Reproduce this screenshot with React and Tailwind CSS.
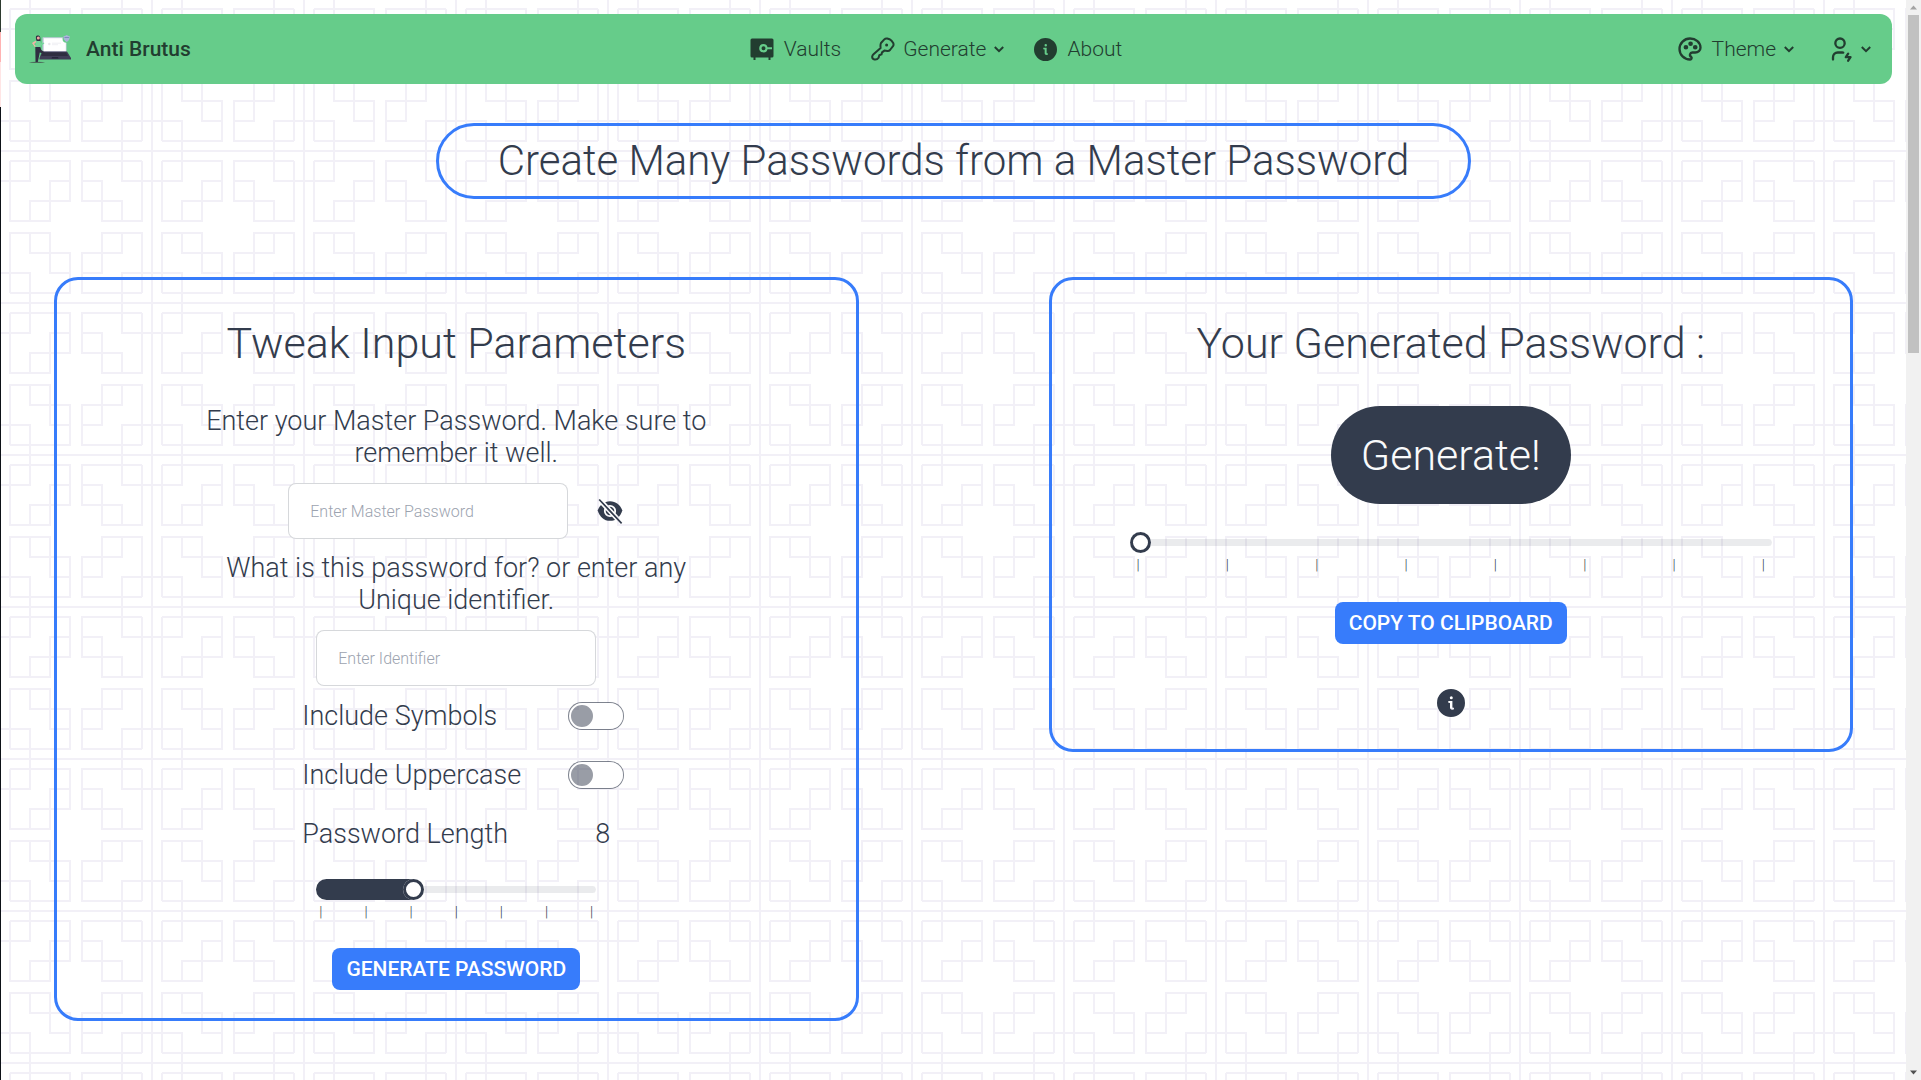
import { useState } from "react";
import { TbPalette, TbUserBolt } from "react-icons/tb";

const QUADRANT =
  "M10 10H70V50H30V70M10 10V70H50V30H70M0 30H30V0";

function PatternBackdrop() {
  return (
    <svg className="absolute inset-0 h-full w-full" aria-hidden="true">
      <defs>
        <g id="fret" fill="none" stroke="#f2f0f7" strokeWidth="2">
          <path d={QUADRANT} />
        </g>
        <pattern id="lattice" x="-1" y="-1" width="152" height="152" patternUnits="userSpaceOnUse">
          <use href="#fret" />
          <use href="#fret" transform="translate(152 0) scale(-1 1)" />
          <use href="#fret" transform="translate(0 152) scale(1 -1)" />
          <use href="#fret" transform="translate(152 152) scale(-1 -1)" />
          <path d="M0 0H152V152H0Z" fill="none" stroke="#f2f0f7" strokeWidth="2" />
        </pattern>
      </defs>
      <rect width="100%" height="100%" fill="url(#lattice)" />
    </svg>
  );
}

function Logo() {
  return (
    <svg className="h-7 w-[42px]" viewBox="0 0 42 28" aria-hidden="true">
      <ellipse cx="8" cy="27.3" rx="8" ry="0.6" fill="#4b6b5a" />
      <path d="M14 2.2h22.5a1 1 0 0 1 1 1V17H13.5V3a.8.8 0 0 1 .5-.8Z" fill="#c9cbe0" />
      <path d="M14.8 3.2h22v13h-22z" fill="#fff" />
      <circle cx="20.300" cy="9" r="1.2" fill="#e6e6ea" />
      <path d="M23 8.200h9M23 9.700h6" stroke="#ececf0" strokeWidth="0.8" />
      <path d="M13 16.500h25l4 6.500v1.500H10.500V23Z" fill="#3f3d56" />
      <path d="M14 17.500h23l2 3.500H12Z" fill="#2f2e41" />
      <path d="M23 22h6l.6 1.500h-7z" fill="#26263a" />
      <circle cx="37.500" cy="3.800" r="4" fill="#66cc8a" />
      <path d="M34.500 1c1.500 0 2.500-.5 3.200-1 .7.500 1.700 1 3 1 .2 2.800-.8 5-3 6-2.200-1-3.400-3.200-3.200-6Z" fill="#a9b4d8" />
      <path d="M35.500 2.500h4.500" stroke="#7d8bbd" strokeWidth="1" />
      <path d="M7 1.500C7.500 0 11 .2 11.200 2.200c.2 1.500.6 3 .2 4H8C7 5 6.700 3 7 1.500Z" fill="#2f2e41" />
      <circle cx="9.300" cy="3" r="1.500" fill="#f0a7a0" />
      <path d="M3 8 6.500 5.800 7.500 7 5 9l2 2-1 1.200Z" fill="#f3b3a6" />
      <path d="M7 6h4l1 2.500 3-1 .3 1L11.500 11l-.3 1.500H6.500Z" fill="#74d69a" />
      <path d="M6.300 12h5l1 3 3.500 2.500-1 1.300-4-1.300L8.800 27H6.500Z" fill="#2f2e41" />
    </svg>
  );
}

function SafeIcon() {
  return (
    <svg className="h-6 w-6" viewBox="0 0 24 24" fill="currentColor" aria-hidden="true">
      <path
        fillRule="evenodd"
        d="M2 1.500h20A1.500 1.500 0 0 1 23.500 3v16A1.500 1.500 0 0 1 22 20.500h-1.500V23h-2v-2.500h-13V23h-2v-2.500H2A1.500 1.500 0 0 1 .5 19V3A1.500 1.500 0 0 1 2 1.500ZM13.500 7a4.200 4.200 0 1 0 4 5.200H22v-2h-4.500A4.200 4.200 0 0 0 13.500 7Zm0 2.200a2 2 0 1 1 0 4 2 2 0 0 1 0-4Z"
      />
    </svg>
  );
}

function KeyIcon() {
  return (
    <svg className="h-6 w-6" viewBox="0 0 24 24" fill="none" stroke="currentColor" strokeWidth="2" strokeLinejoin="round" aria-hidden="true">
      <path d="M10 6 13.300 2.400Q14.500 1.200 16.200 1.500L18.500 2.200Q20.800 3.500 22.200 6 23 7.800 22 9.200L19 13Q18 14.200 16.300 14L13.400 13.600 11 15.400 10.500 17.400 8.300 18.300 7.600 20.700Q6 23 3.500 22.500 1 22 1.200 19.500 1.500 18.200 2.500 17.300L9.600 11Q9.200 7.300 10 6Z" />
      <circle cx="15.600" cy="8" r="1.500" fill="currentColor" stroke="none" />
    </svg>
  );
}

function InfoIcon({ className }) {
  return (
    <svg className={className} viewBox="0 0 28 28" fill="currentColor" aria-hidden="true">
      <path
        fillRule="evenodd"
        d="M14 0a14 14 0 1 1 0 28 14 14 0 0 1 0-28ZM14.300 7.200a1.500 1.500 0 1 0 0 3 1.500 1.500 0 0 0 0-3ZM11.300 12v1.700l1.700.3v4.600c0 1.400.8 2.100 2.200 2.100.8 0 1.400-.2 1.900-.5l-.2-1.500c-.9.300-1.500.1-1.500-.7V12Z"
      />
    </svg>
  );
}

function EyeOffIcon() {
  return (
    <svg className="h-7 w-7" viewBox="0 0 28 28" aria-hidden="true">
      <defs>
        <mask id="eye-cut">
          <rect width="28" height="28" fill="#fff" />
          <circle cx="14" cy="14" r="5.200" fill="none" stroke="#000" strokeWidth="1.800" />
          <path d="M1.800 3.200 24.300 27" stroke="#000" strokeWidth="2" />
          <path d="M4.600 1.800 27 25.600" stroke="#000" strokeWidth="2" />
        </mask>
      </defs>
      <path
        d="M14 4.200c6 0 10.400 3.800 12.300 9.200C24.400 19.700 20 23.800 14 23.800S3.600 19.700 1.700 13.400C3.600 8 8 4.200 14 4.200Z"
        fill="currentColor"
        mask="url(#eye-cut)"
      />
      <path d="M3.200 2.500 25.600 26.300" stroke="currentColor" strokeWidth="1.700" />
    </svg>
  );
}

function Chevron() {
  return (
    <svg className="h-[7px] w-[10px]" viewBox="0 0 10 7" fill="none" stroke="currentColor" strokeWidth="2" aria-hidden="true">
      <path d="M.8 1 5 5.200 9.200 1" />
    </svg>
  );
}

function Header() {
  return (
    <header className="mx-[14px] mt-[14px] flex h-[70px] items-center rounded-xl bg-[#66cc8a] px-[14px] text-[21px] font-light text-[#223d30]">
      <a href="#home" className="flex flex-1 items-center gap-[15px] font-medium">
        <Logo />
        Anti Brutus
      </a>
      <nav className="mr-7 flex items-center gap-[30px]">
        <a href="#vaults" className="flex items-center gap-[10px]">
          <SafeIcon />
          Vaults
        </a>
        <button type="button" className="flex items-center gap-2">
          <KeyIcon />
          Generate
          <Chevron />
        </button>
        <a href="#about" className="flex items-center gap-[10px]">
          <InfoIcon className="h-[23px] w-[23px]" />
          About
        </a>
      </nav>
      <div className="flex flex-1 items-center justify-end gap-8 pr-[7px]">
        <button type="button" className="flex items-center gap-2">
          <TbPalette className="h-7 w-7" />
          Theme
          <Chevron />
        </button>
        <button type="button" aria-label="Account" className="flex items-center gap-[7px]">
          <TbUserBolt className="h-7 w-7" />
          <Chevron />
        </button>
      </div>
    </header>
  );
}

function Card({ title, children }) {
  return (
    <section className="flex flex-col items-center rounded-3xl border-3 border-[#377cfb] pt-[39px]">
      <h2 className="text-[43px] leading-[48px] font-light">{title}</h2>
      {children}
    </section>
  );
}

function Toggle({ id, label }) {
  return (
    <div className="flex h-7 items-center justify-between pl-[14px]">
      <label htmlFor={id}>{label}</label>
      <input
        id={id}
        type="checkbox"
        role="switch"
        className="h-7 w-14 appearance-none rounded-full border border-[#333c4d]/25 bg-[#333c4d]/50 shadow-[inset_-28px_0_0_2px_white,inset_0_0_0_2px_white] checked:shadow-[inset_28px_0_0_2px_white,inset_0_0_0_2px_white]"
      />
    </div>
  );
}

function Slider({ count, tickClass, ...props }) {
  return (
    <>
      <input
        type="range"
        className="block h-[21px] w-full appearance-none overflow-hidden rounded-full bg-transparent [&::-webkit-slider-runnable-track]:h-[7px] [&::-webkit-slider-runnable-track]:rounded-full [&::-webkit-slider-runnable-track]:bg-[#333c4d]/10 [&::-webkit-slider-thumb]:-mt-[7px] [&::-webkit-slider-thumb]:h-[21px] [&::-webkit-slider-thumb]:w-[21px] [&::-webkit-slider-thumb]:appearance-none [&::-webkit-slider-thumb]:rounded-full [&::-webkit-slider-thumb]:bg-white [&::-webkit-slider-thumb]:shadow-[inset_0_0_0_3px_#333c4d,-1610px_0_0_1600px_#333c4d]"
        {...props}
      />
      <div className={`flex w-full justify-between text-sm leading-4 ${tickClass}`} aria-hidden="true">
        {Array.from({ length: count }, (_, i) => (
          <span key={i}>|</span>
        ))}
      </div>
    </>
  );
}

const FIELD =
  "h-14 w-[280px] rounded-lg border border-[#333c4d]/20 bg-white px-[21px] text-base placeholder:text-[#9ca3af]";
const ACTION =
  "h-[42px] rounded-lg bg-[#377cfb] px-[14px] text-[21px] font-medium text-white uppercase";

function InputCard() {
  const [length, setLength] = useState(8);
  return (
    <Card title="Tweak Input Parameters">
      <label htmlFor="master" className="mt-[38px] max-w-[520px] text-center">
        Enter your Master Password. Make sure to remember it well.
      </label>
      <div className="mt-[14px] flex w-[336px] items-center justify-between">
        <input id="master" type="password" placeholder="Enter Master Password" className={FIELD} />
        <button type="button" aria-label="Show password">
          <EyeOffIcon />
        </button>
      </div>
      <label htmlFor="identifier" className="mt-[13px] max-w-[520px] text-center">
        What is this password for? or enter any Unique identifier.
      </label>
      <input id="identifier" type="text" placeholder="Enter Identifier" className={`mt-[14px] ${FIELD}`} />
      <div className="mt-4 flex w-[336px] flex-col gap-[31px]">
        <Toggle id="symbols" label="Include Symbols" />
        <Toggle id="uppercase" label="Include Uppercase" />
        <div className="flex h-7 items-center justify-between pr-[14px] pl-[14px]">
          <label htmlFor="length">Password Length</label>
          <output htmlFor="length">{length}</output>
        </div>
      </div>
      <div className="mt-[31px] w-[280px]">
        <Slider
          id="length"
          min="4"
          max="16"
          value={length}
          onChange={(e) => setLength(e.target.value)}
          count={7}
          tickClass="mt-1 px-[3px]"
        />
      </div>
      <button type="button" className={`mt-7 mb-7 ${ACTION}`}>
        Generate Password
      </button>
    </Card>
  );
}

function ResultCard() {
  return (
    <Card title="Your Generated Password :">
      <output className="mt-[39px] flex h-[98px] items-center rounded-full bg-[#333c4d] px-[30px] text-[43px] text-[#f9fafb]">
        Generate!
      </output>
      <div className="mt-7 w-full px-[78px]">
        <Slider aria-label="Password strength" min="0" max="100" defaultValue="0" count={8} tickClass="mt-1 px-[7px]" />
      </div>
      <button type="button" className={`mt-[29px] ${ACTION}`}>
        Copy to clipboard
      </button>
      <button type="button" aria-label="More information" className="mt-[45px] mb-8">
        <InfoIcon className="h-7 w-7" />
      </button>
    </Card>
  );
}

function Scrollbar() {
  return (
    <div className="flex w-[15px] shrink-0 flex-col items-center bg-[#f1f1f1]" aria-hidden="true">
      <svg className="h-[15px] w-[15px]" viewBox="0 0 15 15">
        <path d="M7.500 5.500 11 9.500H4Z" fill="#a3a3a3" />
      </svg>
      <div className="h-[338px] w-[11px] bg-[#c1c1c1]" />
      <svg className="mt-auto h-[15px] w-[15px]" viewBox="0 0 15 15">
        <path d="M7.500 9.500 11 5.500H4Z" fill="#505050" />
      </svg>
    </div>
  );
}

export default function App() {
  return (
    <div className="flex h-screen overflow-hidden bg-white font-[Roboto,sans-serif] text-[27px] leading-8 font-light text-[#333c4d]">
      <div className="flex w-px shrink-0 flex-col bg-[#0d1117]" aria-hidden="true">
        <div className="h-8 bg-[#2d3a2f]" />
        <div className="h-[30px] bg-[#ffb3b3]" />
        <div className="h-[45px] bg-[#ffe5e5]" />
      </div>
      <div className="relative min-w-0 flex-1 overflow-hidden">
        <PatternBackdrop />
        <div className="relative flex flex-col">
          <Header />
          <h1 className="mt-[39px] flex h-[76px] items-center self-center rounded-full border-3 border-[#377cfb] px-[59px] text-[42px]">
            Create Many Passwords from a Master Password
          </h1>
          <main className="mt-[78px] grid grid-cols-2 items-start gap-[190px] px-[53px]">
            <InputCard />
            <ResultCard />
          </main>
        </div>
      </div>
      <Scrollbar />
    </div>
  );
}
